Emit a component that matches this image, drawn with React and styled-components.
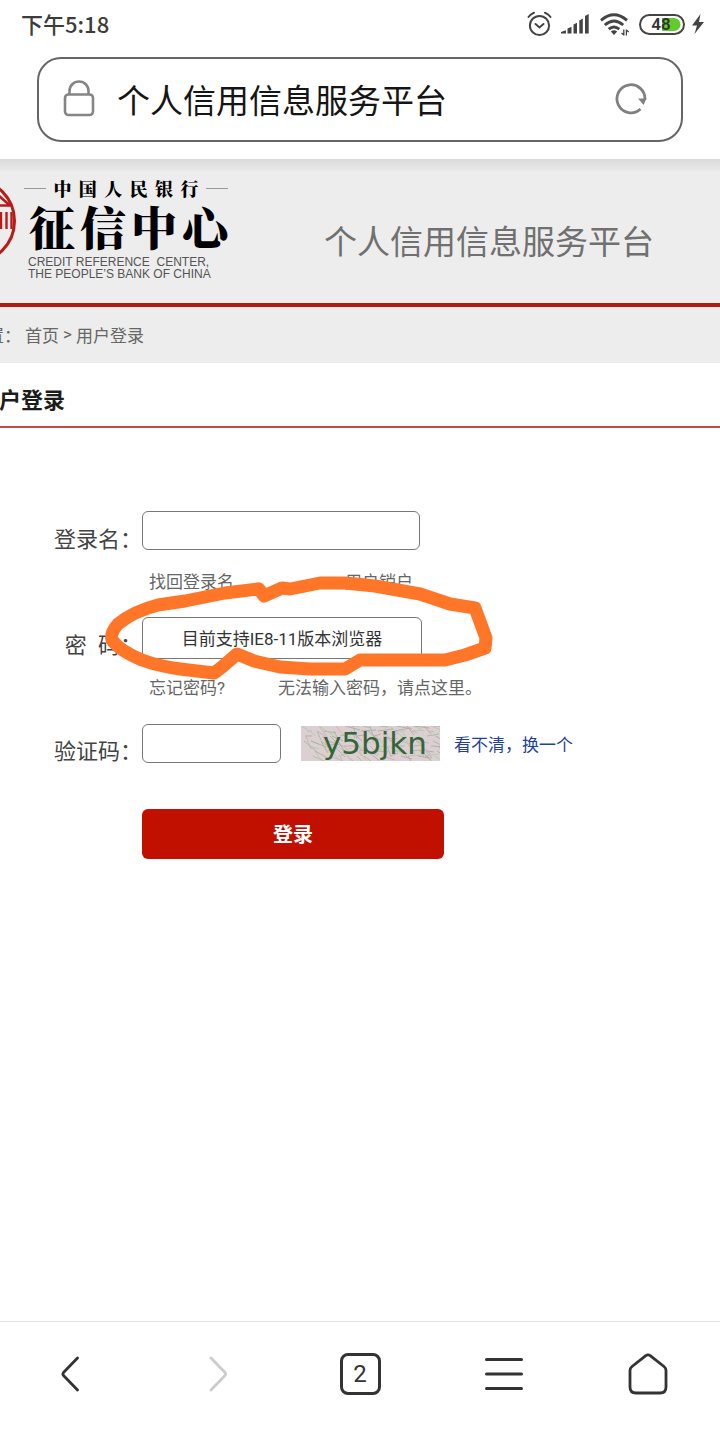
import React from 'react';
import styled, { createGlobalStyle } from 'styled-components';

const RED = '#b01c10';
const LINK_GRAY = '#666';
const INK = '#333';

const GlobalStyle = createGlobalStyle`
  *, *::before, *::after { box-sizing: border-box; }

  body {
    margin: 0;
    background: #fff;
    color: ${INK};
    font-family: Roboto, "Noto Sans CJK SC", sans-serif;
  }

  button, input {
    font-family: inherit;
  }
`;

const Screen = styled.div`
  min-height: 100vh;
  display: flex;
  flex-direction: column;
  overflow: hidden;
`;

const StatusBar = styled.div`
  height: 48px;
  padding: 0 16px 0 21px;
  display: flex;
  align-items: center;
  justify-content: space-between;
`;

const Clock = styled.span`
  padding-bottom: 2px;
  font-family: "Noto Sans CJK SC", sans-serif;
  font-size: 22px;
  line-height: 32px;
  font-weight: 500;
  color: #3c3c3c;
`;

const StatusIcons = styled.div`
  display: flex;
  align-items: center;
  gap: 7px;
`;

const AddressBar = styled.div`
  height: 85px;
  margin: 9px 37px 17px;
  padding: 0 34px 2px 24px;
  display: flex;
  align-items: center;
  border: 2px solid #666;
  border-radius: 24px;
`;

const AddressTitle = styled.span`
  flex: 1;
  margin-left: 22px;
  padding-top: 6px;
  font-size: 33px;
  line-height: 48px;
  color: #151515;
`;

const IconButton = styled.button`
  padding: 0;
  display: flex;
  align-items: center;
  justify-content: center;
  border: none;
  background: none;
  cursor: pointer;
`;

const Page = styled.main`
  flex: 1;
  position: relative;
`;

const SiteHeader = styled.header`
  height: 148px;
  padding-right: 66px;
  display: flex;
  align-items: flex-start;
  justify-content: space-between;
  border-bottom: 4px solid ${RED};
  background: linear-gradient(#d9d9d9, #ededed 14px);
`;

const Brand = styled.div`
  display: flex;
  align-items: flex-start;
`;

const BrandText = styled.div`
  width: 204px;
  margin-left: 6px;
  padding-top: 18px;
  font-family: "Noto Serif CJK SC", "Noto Sans CJK SC", serif;
  font-weight: 900;
  color: #000;
`;

const BankName = styled.div`
  display: flex;
  align-items: center;
  justify-content: space-between;
  font-size: 18px;
  line-height: 23px;

  &::before, &::after {
    content: '';
    width: 22px;
    height: 1px;
    background: #999;
  }
`;

const CenterName = styled.div`
  padding-left: 5px;
  display: flex;
  justify-content: space-between;
  font-size: 46px;
  line-height: 50px;
`;

const EnglishName = styled.div`
  padding: 6px 0 0 4px;
  font-family: "Liberation Sans", sans-serif;
  font-size: 12px;
  line-height: 12px;
  font-weight: 400;
  white-space: nowrap;
  color: #555;
`;

const SiteTitle = styled.h1`
  margin: 60px 0 0;
  font-size: 33px;
  line-height: 48px;
  font-weight: 400;
  color: #707070;
`;

const Breadcrumb = styled.nav`
  height: 56px;
  margin-left: -64px;
  padding-bottom: 2px;
  display: flex;
  align-items: center;
  gap: 4px;
  font-size: 17px;
  background: #ededed;
  color: ${LINK_GRAY};
`;

const SectionTitle = styled.h2`
  height: 65px;
  margin: 0 0 0 -23px;
  padding-top: 22px;
  border-bottom: 2px solid #c24a3e;
  font-size: 22px;
  line-height: 32px;
  font-weight: 700;
  color: #1c1c1c;
`;

const LoginForm = styled.form`
  padding: 83px 0 60px;
`;

const FormRow = styled.div`
  display: grid;
  grid-template-columns: 142px 1fr;
  margin-bottom: 23px;
`;

const Label = styled.label`
  padding-top: 13px;
  text-align: right;
  font-size: 22px;
  line-height: 32px;
  color: #444;
`;

const FieldLine = styled.div`
  height: 42px;
  display: flex;
  align-items: flex-start;
`;

const TextField = styled.input`
  width: ${({ $width }) => $width}px;
  height: ${({ $tall }) => ($tall ? 42 : 39)}px;
  padding: 0 8px 2px;
  border: 1px solid #777;
  border-radius: 6px;
  background: #fff;
  outline: none;
  font-size: 17px;
  color: ${INK};
  text-align: ${({ $tall }) => ($tall ? 'center' : 'left')};
`;

const Hints = styled.div`
  margin-top: 17px;
  padding-left: 7px;
  display: flex;
  gap: ${({ $gap }) => $gap}px;
`;

const TextLink = styled.a`
  font-size: 17px;
  line-height: 24px;
  text-decoration: none;
  color: ${({ $blue }) => ($blue ? '#1f3f9c' : LINK_GRAY)};
`;

const CaptchaLine = styled.div`
  height: 40px;
  display: flex;
  align-items: center;
  gap: 14px;

  svg { margin-left: 6px; }
  a { padding-top: 3px; }
`;

const SubmitButton = styled.button`
  width: 302px;
  height: 50px;
  margin: 18px 0 0 142px;
  padding: 0 0 2px;
  border: none;
  border-radius: 6px;
  background: #c11000;
  color: #fff;
  font-size: 20px;
  font-weight: 700;
  cursor: pointer;
`;

const Scribble = styled.svg`
  position: absolute;
  top: 411px;
  left: 95px;
  pointer-events: none;
`;

const BottomNav = styled.nav`
  height: 119px;
  padding-bottom: 14px;
  display: grid;
  grid-template-columns: repeat(5, 1fr);
  border-top: 1px solid #e2e2e2;
`;

const TabCount = styled.span`
  width: 41px;
  height: 42px;
  display: flex;
  align-items: center;
  justify-content: center;
  border: 3px solid ${INK};
  border-radius: 8px;
  font-size: 24px;
  color: ${INK};
`;

const AlarmIcon = () => (
  <svg width="27" height="26" viewBox="0 0 27 26" fill="none" stroke="#444" strokeWidth="2" strokeLinecap="round">
    <circle cx="12.5" cy="14.5" r="9.6" />
    <path d="M8.5 13l4 3.4 4-3.4M1.5 6Q3.5 3 7 1.7M23.5 6Q21.5 3 18 1.7" />
  </svg>
);

const SignalIcon = () => (
  <svg width="32" height="22" viewBox="0 0 32 22" fill="#444">
    <path d="M0 20.5v-1.500l5-1.700v3.200zM6.500 20.500v-5l4-1.800v6.800zM12.500 20.500V11.500l3.500-1.700v10.700zM18.300 20.500V7.500l3.500-1.900v14.900zM24 20.500V3l3.700-2v19.500z" />
  </svg>
);

const WifiIcon = () => (
  <svg width="32" height="24" viewBox="0 0 32 24" fill="none" stroke="#444" strokeWidth="2.9">
    <path d="M1 8.300Q14 -2.800 27 8.300M4.800 13Q14 4.800 23.200 13M8.700 17.200Q14 12.700 19.300 17.200" />
    <path d="M10.800 19.500q3.200-2.600 6.400 0L14 23z" fill="#444" stroke="none" />
    <path d="M23.800 17.500v6M26.400 17.500v6M21.500 21l2.300 2M28.700 20l-2.300-2" strokeWidth="1.3" />
  </svg>
);

const BatteryIcon = () => (
  <svg width="46" height="21" viewBox="0 0 46 21">
    <rect x="1" y="1" width="44" height="19" rx="9.5" fill="#fff" stroke="#444" strokeWidth="2" />
    <path d="M23 4h12a6.500 6.500 0 0 1 0 13H23z" fill="#63cb2b" />
    <text x="22" y="16" textAnchor="middle" fontFamily="Roboto, sans-serif" fontSize="17" fontWeight="600" fill={INK}>48</text>
  </svg>
);

const BoltIcon = () => (
  <svg width="12" height="20" viewBox="0 0 12 20" fill="#444">
    <path d="M8.500 0L0 11.500h5L2.500 20 12 8H7z" />
  </svg>
);

const LockIcon = () => (
  <svg width="32" height="38" viewBox="0 0 32 38" fill="none" stroke="#858585" strokeWidth="2.6">
    <rect x="2" y="14.5" width="28" height="20.5" rx="3.5" />
    <path d="M6.500 14.500v-3.500a9.500 9.500 0 0 1 19 0V14.500" />
  </svg>
);

const ReloadIcon = () => (
  <svg width="32" height="32" viewBox="0 0 32 32" fill="none" stroke="#808080" strokeWidth="2.8">
    <path d="M25.500 26A14 14 0 1 1 29.900 17" />
    <path d="M23 15.500h8.300l-2.600 6.500z" fill="#808080" stroke="none" />
  </svg>
);

const SealLogo = () => (
  <svg width="18" height="120" viewBox="0 0 18 120" fill="none" stroke="#b81c18">
    <circle cx="-27" cy="62" r="41.5" strokeWidth="3" />
    <path d="M-2 36L10 46.500H-2" strokeWidth="2.5" />
    <path d="M1 53v17M6.500 53v17M11.500 53v17" strokeWidth="2.4" />
  </svg>
);

const CaptchaImage = () => (
  <svg width="139" height="35" viewBox="0 0 139 35" role="img" aria-label="y5bjkn">
    <rect width="139" height="35" fill="#dbcfd1" />
    {Array.from({ length: 130 }, (_, i) => {
      const x = (i * 37 + (i % 7) * 5) % 139;
      const y = (i * 17 + (i % 5) * 3) % 35;
      const dx = 4 + ((i * 13) % 12);
      const dy = ((i * 7) % 17) - 3;
      return (
        <path
          key={i}
          d={`M${x} ${y}l${dx} ${dy}`}
          stroke={['#a9bda3', '#cdb4bb', '#b6ccb0', '#b9adad'][i % 4]}
          strokeWidth="1"
        />
      );
    })}
    <text x="22" y="28" fontFamily="DejaVu Sans, sans-serif" fontSize="31" fill="#356438">y5bjkn</text>
  </svg>
);

const ChevronIcon = ({ forward }) => (
  <svg width="22" height="38" viewBox="0 0 22 38" fill="none" stroke={forward ? '#ccc' : INK} strokeWidth="2.8" strokeLinecap="round" strokeLinejoin="round">
    <path d={forward ? 'M6 3l14 14.500q1.200 1.500 0 3L6 35' : 'M16.500 3L2.500 17.500q-1.200 1.500 0 3L16.500 35'} />
  </svg>
);

const MenuIcon = () => (
  <svg width="38" height="34" viewBox="0 0 38 34" stroke={INK} strokeWidth="3" strokeLinecap="round">
    <path d="M1.500 2.500h35M1.500 17h35M1.500 31.500h35" />
  </svg>
);

const HomeIcon = () => (
  <svg width="40" height="42" viewBox="0 0 40 42" fill="none" stroke={INK} strokeWidth="2.8" strokeLinejoin="round">
    <path d="M17.500 2.800q2.500-1.800 5 0L36 13.500q2 1.700 2 4V34q0 6-6 6H8q-6 0-6-6V17.500q0-2.300 2-4z" />
  </svg>
);

const BANK_NAME = ['中', '国', '人', '民', '银', '行'];
const CENTER_NAME = ['征', '信', '中', '心'];

const App = () => (
  <>
    <GlobalStyle />
    <Screen>
      <StatusBar>
        <Clock>下午5:18</Clock>
        <StatusIcons>
          <AlarmIcon />
          <SignalIcon />
          <WifiIcon />
          <BatteryIcon />
          <BoltIcon />
        </StatusIcons>
      </StatusBar>

      <AddressBar>
        <LockIcon />
        <AddressTitle>个人信用信息服务平台</AddressTitle>
        <IconButton aria-label="刷新"><ReloadIcon /></IconButton>
      </AddressBar>

      <Page>
        <SiteHeader>
          <Brand>
            <SealLogo />
            <BrandText>
              <BankName>
                {BANK_NAME.map((char) => <span key={char}>{char}</span>)}
              </BankName>
              <CenterName>
                {CENTER_NAME.map((char) => <span key={char}>{char}</span>)}
              </CenterName>
              <EnglishName>
                CREDIT REFERENCE&nbsp; CENTER,<br />
                THE PEOPLE’S BANK OF CHINA
              </EnglishName>
            </BrandText>
          </Brand>
          <SiteTitle>个人信用信息服务平台</SiteTitle>
        </SiteHeader>

        <Breadcrumb>
          <span>当前位置：</span>
          <span>首页</span>
          <span>&gt;</span>
          <span>用户登录</span>
        </Breadcrumb>

        <SectionTitle>用户登录</SectionTitle>

        <LoginForm onSubmit={(e) => e.preventDefault()}>
          <FormRow>
            <Label htmlFor="username">登录名：</Label>
            <div>
              <FieldLine><TextField id="username" type="text" $width={278} /></FieldLine>
              <Hints $gap={111}>
                <TextLink href="#find">找回登录名</TextLink>
                <TextLink href="#cancel">用户销户</TextLink>
              </Hints>
            </div>
          </FormRow>

          <FormRow>
            <Label htmlFor="password">密&ensp;码：</Label>
            <div>
              <FieldLine>
                <TextField id="password" type="text" $width={280} $tall readOnly value="目前支持IE8-11版本浏览器" />
              </FieldLine>
              <Hints $gap={53}>
                <TextLink href="#forgot">忘记密码?</TextLink>
                <TextLink href="#help">无法输入密码，请点这里。</TextLink>
              </Hints>
            </div>
          </FormRow>

          <FormRow>
            <Label htmlFor="captcha">验证码：</Label>
            <CaptchaLine>
              <TextField id="captcha" type="text" $width={139} />
              <CaptchaImage />
              <TextLink href="#refresh" $blue>看不清，换一个</TextLink>
            </CaptchaLine>
          </FormRow>

          <SubmitButton type="submit">登录</SubmitButton>
        </LoginForm>

        <Scribble width="405" height="120" viewBox="95 570 405 120" fill="none" stroke="#ff7628" strokeWidth="13" strokeLinecap="round" strokeLinejoin="round">
          <path d="M258 589L225 593L185 601L158 605Q134 611 118 624Q110 633 112 640Q120 651 142 660Q158 666 180 669L214 673L222 667L237 654L254 661L280 667L310 669H345L360 660H445L465 655L485 648L486 638L475 608L450 604L420 594L375 586L345 583H320L290 589L282 588L264 596L259 589" />
        </Scribble>
      </Page>

      <BottomNav>
        <IconButton aria-label="后退"><ChevronIcon /></IconButton>
        <IconButton aria-label="前进"><ChevronIcon forward /></IconButton>
        <IconButton aria-label="标签页"><TabCount>2</TabCount></IconButton>
        <IconButton aria-label="菜单"><MenuIcon /></IconButton>
        <IconButton aria-label="主页"><HomeIcon /></IconButton>
      </BottomNav>
    </Screen>
  </>
);

export default App;
